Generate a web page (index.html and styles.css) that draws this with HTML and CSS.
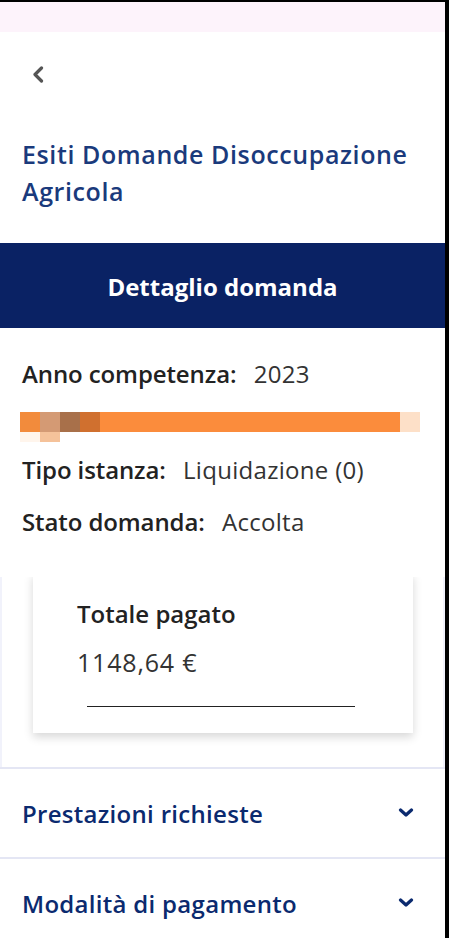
FILE: index.html
```html
<!DOCTYPE html>
<html lang="it">
<head>
    <meta charset="UTF-8">
    <meta name="viewport" content="width=device-width, initial-scale=1.0">
    <title>Esiti Domande Disoccupazione Agricola</title>
    <link rel="stylesheet" href="styles.css">
</head>
<body>
    <div class="screen">
        <div class="status-bar"></div>

        <div class="top-nav">
            <svg class="back-icon" width="12" height="17" viewBox="0 0 12 17">
                <path d="M9.5 2 L3 8.5 L9.5 15" fill="none" stroke="#555" stroke-width="3.2" stroke-linecap="round" stroke-linejoin="round"/>
            </svg>
        </div>

        <h1 class="page-title">Esiti Domande Disoccupazione Agricola</h1>

        <div class="banner">Dettaglio domanda</div>

        <div class="details">
            <div class="detail-row">
                <span class="detail-label">Anno competenza:</span>
                <span class="detail-value">2023</span>
            </div>

            <!-- dato oscurato -->
            <div class="mosaic">
                <div class="mosaic-row tall">
                    <span class="tile c1"></span>
                    <span class="tile c2"></span>
                    <span class="tile c3"></span>
                    <span class="tile c4"></span>
                    <span class="tile c5 wide"></span>
                    <span class="tile c6"></span>
                </div>
                <div class="mosaic-row short">
                    <span class="tile c7"></span>
                    <span class="tile c8"></span>
                </div>
            </div>

            <div class="detail-row">
                <span class="detail-label">Tipo istanza:</span>
                <span class="detail-value">Liquidazione (0)</span>
            </div>
            <div class="detail-row">
                <span class="detail-label">Stato domanda:</span>
                <span class="detail-value">Accolta</span>
            </div>
        </div>

        <div class="card-area">
            <div class="card">
                <div class="card-label">Totale pagato</div>
                <div class="card-value">1148,64 €</div>
                <div class="card-line"></div>
            </div>
        </div>

        <div class="accordion">
            <div class="accordion-item">
                <span>Prestazioni richieste</span>
                <svg class="chevron" width="16" height="10" viewBox="0 0 16 10">
                    <path d="M2.5 2 L8 7 L13.5 2" fill="none" stroke="#0b2a6f" stroke-width="3.2" stroke-linecap="round" stroke-linejoin="round"/>
                </svg>
            </div>
            <div class="accordion-item">
                <span>Modalità di pagamento</span>
                <svg class="chevron" width="16" height="10" viewBox="0 0 16 10">
                    <path d="M2.5 2 L8 7 L13.5 2" fill="none" stroke="#0b2a6f" stroke-width="3.2" stroke-linecap="round" stroke-linejoin="round"/>
                </svg>
            </div>
        </div>
    </div>
</body>
</html>
```

FILE: styles.css
```css
* {
    box-sizing: border-box;
    font-family: 'Open Sans', 'Noto Sans', sans-serif;
}

body {
    margin: 0;
    padding-top: 2px;
    background-color: #000;
    height: 938px;
    overflow: hidden;
}

.screen {
    width: 445px;
    height: 936px;
    background-color: #fff;
    overflow: hidden;
}

.status-bar {
    height: 30px;
    background-color: #fdf3fb;
}

.top-nav {
    height: 104px;
    padding: 34px 0 0 32px;
}

.back-icon {
    display: block;
}

.page-title {
    margin: 0;
    padding: 0 22px;
    height: 107px;
    font-size: 25px;
    font-weight: 600;
    line-height: 37px;
    color: #1a3a7c;
    letter-spacing: 0.6px;
}

.banner {
    height: 85px;
    background-color: #0a2264;
    color: #fff;
    font-size: 24px;
    font-weight: 700;
    text-align: center;
    line-height: 88px;
}

.details {
    padding: 32px 0 0 22px;
    height: 249px;
}

.detail-row {
    font-size: 24px;
    line-height: 28px;
    color: #222;
    margin-bottom: 24px;
}

.detail-label {
    font-weight: 600;
    margin-right: 11px;
    letter-spacing: -0.1px;
}

.detail-value {
    color: #333;
    letter-spacing: 0.3px;
}

.mosaic {
    margin: 17px 0 14px -2px;
}

.mosaic-row {
    display: flex;
}

.mosaic-row.tall {
    height: 20px;
}

.mosaic-row.short {
    height: 10px;
}

.tile {
    width: 20px;
}

.tile.wide {
    width: 300px;
}

.c1 { background-color: #f28b3c; }
.c2 { background-color: #d49a74; }
.c3 { background-color: #a8704a; }
.c4 { background-color: #d0702f; }
.c5 { background-color: #fb8c3c; }
.c6 { background-color: #fde0c8; }
.c7 { background-color: #fff5ec; }
.c8 { background-color: #f5c29a; }

.card-area {
    height: 190px;
    padding: 0 33px 0 33px;
    border-left: 2px solid #f1f2fb;
    border-right: 2px solid #f1f2fb;
    overflow: hidden;
}

.card {
    margin-top: -4px;
    margin-left: -2px;
    width: 380px;
    height: 160px;
    background-color: #fff;
    box-shadow: 0 4px 9px rgba(0, 0, 0, 0.16);
    padding: 27px 0 0 44px;
}

.card-label {
    font-size: 24px;
    font-weight: 600;
    color: #222;
    line-height: 28px;
}

.card-value {
    font-size: 25px;
    color: #333;
    line-height: 28px;
    margin-top: 20px;
    letter-spacing: 0.8px;
}

.card-line {
    width: 268px;
    margin: 30px 0 0 10px;
    border-top: 1.5px solid #222;
}

.accordion-item {
    height: 90px;
    border-top: 2px solid #e4e6f4;
    display: flex;
    align-items: center;
    justify-content: space-between;
    padding: 0 31px 0 22px;
    font-size: 24px;
    font-weight: 600;
    color: #0b2a6f;
    letter-spacing: 0.3px;
}

.chevron {
    display: block;
}
```
